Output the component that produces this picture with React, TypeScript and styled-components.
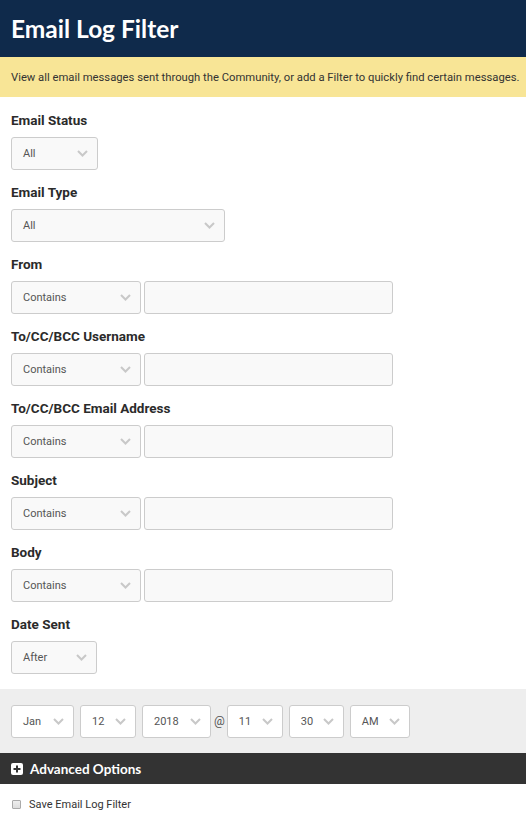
import React from "react";
import styled, { createGlobalStyle } from "styled-components";

const Global = createGlobalStyle`
  html, body { margin: 0; padding: 0; background: #fff; }
  body { font-family: Roboto, "Liberation Sans", sans-serif; color: #333; }
  * { box-sizing: border-box; }
`;

const Page = styled.div`
  width: 526px;
  min-height: 818px;
  display: flex;
  flex-direction: column;
`;

const Header = styled.header`
  height: 57px;
  background: #0f2a4b;
  display: flex;
  align-items: center;
  padding: 0 11px 1px;
`;

const Title = styled.h1`
  margin: 0;
  font-family: Lato, "Liberation Sans", sans-serif;
  font-weight: 700;
  font-size: 24.5px;
  color: #fff;
`;

const Banner = styled.div`
  height: 40px;
  background: #f8e596;
  display: flex;
  align-items: center;
  padding: 0 11px;
  font-size: 11.25px;
  color: #333;
  white-space: nowrap;
`;

const Form = styled.div`
  display: flex;
  flex-direction: column;
  padding: 15px 11px 15px;
  gap: 14px;
`;

const Field = styled.div`
  display: flex;
  flex-direction: column;
  gap: 8px;
`;

const Label = styled.div`
  font-size: 13.5px;
  font-weight: 700;
  color: #2b2b2b;
  line-height: 17px;
`;

const Row = styled.div`
  display: flex;
  align-items: center;
  gap: 3px;
`;

const SelectBox = styled.div<{ $w: number; $white?: boolean }>`
  width: ${(p) => p.$w}px;
  height: 33px;
  border: 1px solid #ccc;
  border-radius: 3px;
  background: ${(p) => (p.$white ? "#fff" : "#f9f9f9")};
  display: flex;
  align-items: center;
  justify-content: space-between;
  padding: 0 9px 0 11px;
  font-size: 11px;
  color: #555;
  flex-shrink: 0;
`;

const TextInput = styled.div`
  width: 249px;
  height: 33px;
  border: 1px solid #ccc;
  border-radius: 3px;
  background: #f9f9f9;
`;

const DateBand = styled.div`
  height: 64px;
  background: #eee;
  display: flex;
  align-items: center;
  padding: 0 11px;
  gap: 6px;
`;

const At = styled.span`
  font-size: 12px;
  color: #555;
  margin: 0 -4px 0 -3px;
`;

const AdvancedBar = styled.div`
  height: 31px;
  background: #333;
  display: flex;
  align-items: center;
  gap: 7px;
  padding: 0 11px;
  font-family: Lato, "Liberation Sans", sans-serif;
  font-weight: 700;
  font-size: 13.5px;
  color: #fff;
`;

const CheckRow = styled.label`
  display: flex;
  align-items: center;
  gap: 8px;
  padding: 14px 12px;
  font-size: 11px;
  color: #333;
`;

const CheckBox = styled.span`
  width: 9px;
  height: 9px;
  border: 1px solid #aaa;
  border-radius: 1px;
  background: linear-gradient(#eee, #ddd);
`;

const Chevron = () => (
  <svg width="11" height="7" viewBox="0 0 11 7">
    <path d="M1 1l4.5 4.5L10 1" fill="none" stroke="#c8c8c8" strokeWidth="2" />
  </svg>
);

const Select = ({ w, v, white }: { w: number; v: string; white?: boolean }) => (
  <SelectBox $w={w} $white={white}>
    <span>{v}</span>
    <Chevron />
  </SelectBox>
);

const textFields = [
  "From",
  "To/CC/BCC Username",
  "To/CC/BCC Email Address",
  "Subject",
  "Body",
];

export default function App() {
  return (
    <Page>
      <Global />
      <Header>
        <Title>Email Log Filter</Title>
      </Header>
      <Banner>
        View all email messages sent through the Community, or add a Filter to quickly find certain messages.
      </Banner>
      <Form>
        <Field>
          <Label>Email Status</Label>
          <Row>
            <Select w={87} v="All" />
          </Row>
        </Field>
        <Field>
          <Label>Email Type</Label>
          <Row>
            <Select w={214} v="All" />
          </Row>
        </Field>
        {textFields.map((f) => (
          <Field key={f}>
            <Label>{f}</Label>
            <Row>
              <Select w={130} v="Contains" />
              <TextInput />
            </Row>
          </Field>
        ))}
        <Field>
          <Label>Date Sent</Label>
          <Row>
            <Select w={86} v="After" />
          </Row>
        </Field>
      </Form>
      <DateBand>
        <Select w={63} v="Jan" white />
        <Select w={56} v="12" white />
        <Select w={69} v="2018" white />
        <At>@</At>
        <Select w={56} v="11" white />
        <Select w={55} v="30" white />
        <Select w={60} v="AM" white />
      </DateBand>
      <AdvancedBar>
        <svg width="12" height="12" viewBox="0 0 12 12">
          <rect x="0" y="0" width="12" height="12" rx="2" fill="#fff" />
          <path d="M6 2.5v7M2.5 6h7" stroke="#333" strokeWidth="2" />
        </svg>
        Advanced Options
      </AdvancedBar>
      <CheckRow>
        <CheckBox />
        Save Email Log Filter
      </CheckRow>
    </Page>
  );
}
